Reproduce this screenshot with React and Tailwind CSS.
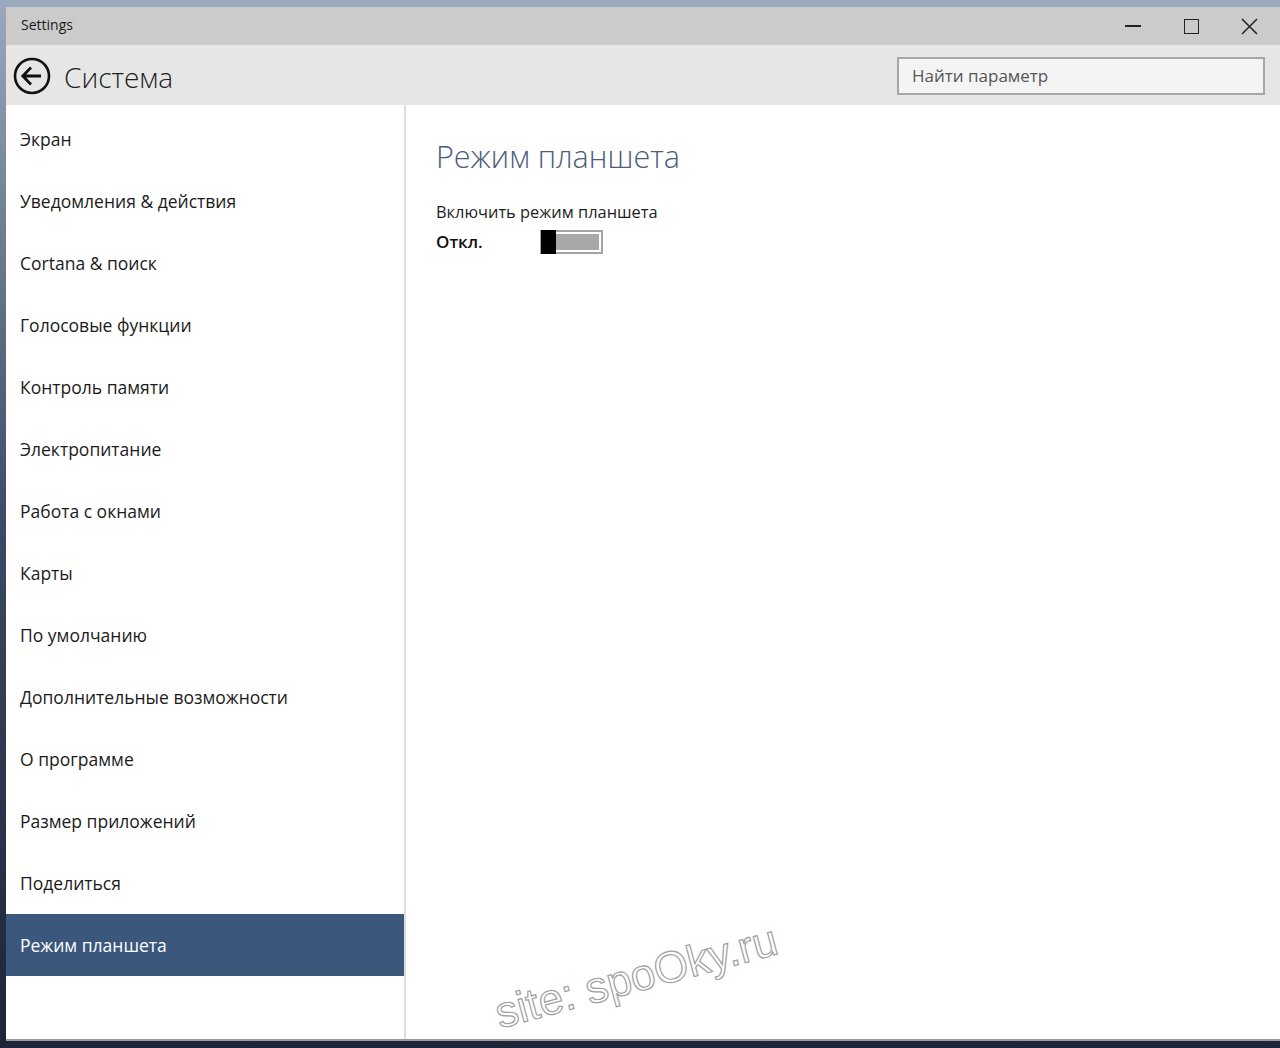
import React from "react";

const items = [
  "Экран",
  "Уведомления & действия",
  "Cortana & поиск",
  "Голосовые функции",
  "Контроль памяти",
  "Электропитание",
  "Работа с окнами",
  "Карты",
  "По умолчанию",
  "Дополнительные возможности",
  "О программе",
  "Размер приложений",
  "Поделиться",
  "Режим планшета",
];

const font = { fontFamily: '"Open Sans", "Noto Sans", sans-serif' };

export default function App() {
  return (
    <div
      className="relative w-[1280px] h-[1048px] overflow-hidden bg-gradient-to-b from-[#9aa9bd] via-[#3c4a63] to-[#1c2438]"
      style={font}
    >
      {/* window */}
      <div className="absolute left-[6px] top-[7px] w-[1274px] h-[1034px] flex flex-col bg-white border-b-2 border-[#9a9a9a]">
        {/* title bar */}
        <div className="h-[38px] shrink-0 flex items-center bg-[#cbcbcb]">
          <span className="pl-[15px] pb-[3px] text-[14px] text-[#1a1a1a]">Settings</span>
          <div className="ml-auto flex h-full">
            <div className="w-[59px] flex items-center justify-center">
              <div className="w-[16px] h-[1.5px] bg-[#222]" />
            </div>
            <div className="w-[59px] flex items-center justify-center">
              <div className="w-[15px] h-[15px] border-[1.5px] border-[#222]" />
            </div>
            <div className="w-[59px] flex items-center justify-center pr-[2px]">
              <svg width="17" height="17" viewBox="0 0 17 17">
                <path d="M1 1 L16 16 M16 1 L1 16" stroke="#222" strokeWidth="1.5" />
              </svg>
            </div>
          </div>
        </div>
        {/* header */}
        <div className="h-[60px] shrink-0 flex items-center bg-[#e6e6e6]">
          <svg className="ml-[7px] mt-[2px]" width="38" height="38" viewBox="0 0 38 38">
            <circle cx="19" cy="19" r="17" fill="none" stroke="#111" strokeWidth="2.6" />
            <path d="M10 19 H28 M18 10.5 L9.8 19 L18 27.5" fill="none" stroke="#111" strokeWidth="2.8" />
          </svg>
          <span className="ml-[13px] mt-[4px] text-[28px] font-light text-[#1e1e1e] leading-none">
            Система
          </span>
          <div className="ml-auto mr-[15px] mt-[2px] w-[368px] h-[38px] border-2 border-[#a6a6a6] bg-[#f4f4f4] flex items-center">
            <span className="pl-[13px] text-[17px] text-[#555]">Найти параметр</span>
          </div>
        </div>
        {/* body */}
        <div className="flex flex-1 min-h-0">
          <div className="w-[400px] shrink-0 pt-[3px] border-r-2 border-[#dedede]">
            {items.map((it, i) => (
              <div
                key={i}
                className={`h-[62px] flex items-center pl-[14px] text-[17.5px] ${
                  i === items.length - 1 ? "bg-[#3b577c] text-white" : "text-[#1b1b1b]"
                }`}
              >
                {it}
              </div>
            ))}
          </div>
          <div className="flex-1 pl-[30px] pt-[36px]">
            <div className="text-[30.5px] font-light text-[#4b5d78] leading-none">Режим планшета</div>
            <div className="mt-[28px] text-[16.4px] text-[#1e1e1e]">Включить режим планшета</div>
            <div className="flex items-center mt-[5px]">
              <span className="w-[104px] text-[17px] font-semibold text-[#111]">Откл.</span>
              <div className="w-[63px] h-[24px] border-2 border-[#a4a4a4] bg-white p-[2px] relative">
                <div className="w-full h-full bg-[#a8a8a8]" />
                <div className="absolute left-[-1px] top-[-2px] w-[15px] h-[24px] bg-black" />
              </div>
            </div>
          </div>
        </div>
      </div>
      {/* watermark */}
      <div
        className="absolute left-[496px] top-[992px] text-[44px] text-white leading-none whitespace-nowrap -rotate-[15deg] origin-left"
        style={{ fontFamily: '"Liberation Sans", Arial, sans-serif', WebkitTextStroke: "1.2px #a0a0a0" }}
      >
        site: spoOky.ru
      </div>
    </div>
  );
}
